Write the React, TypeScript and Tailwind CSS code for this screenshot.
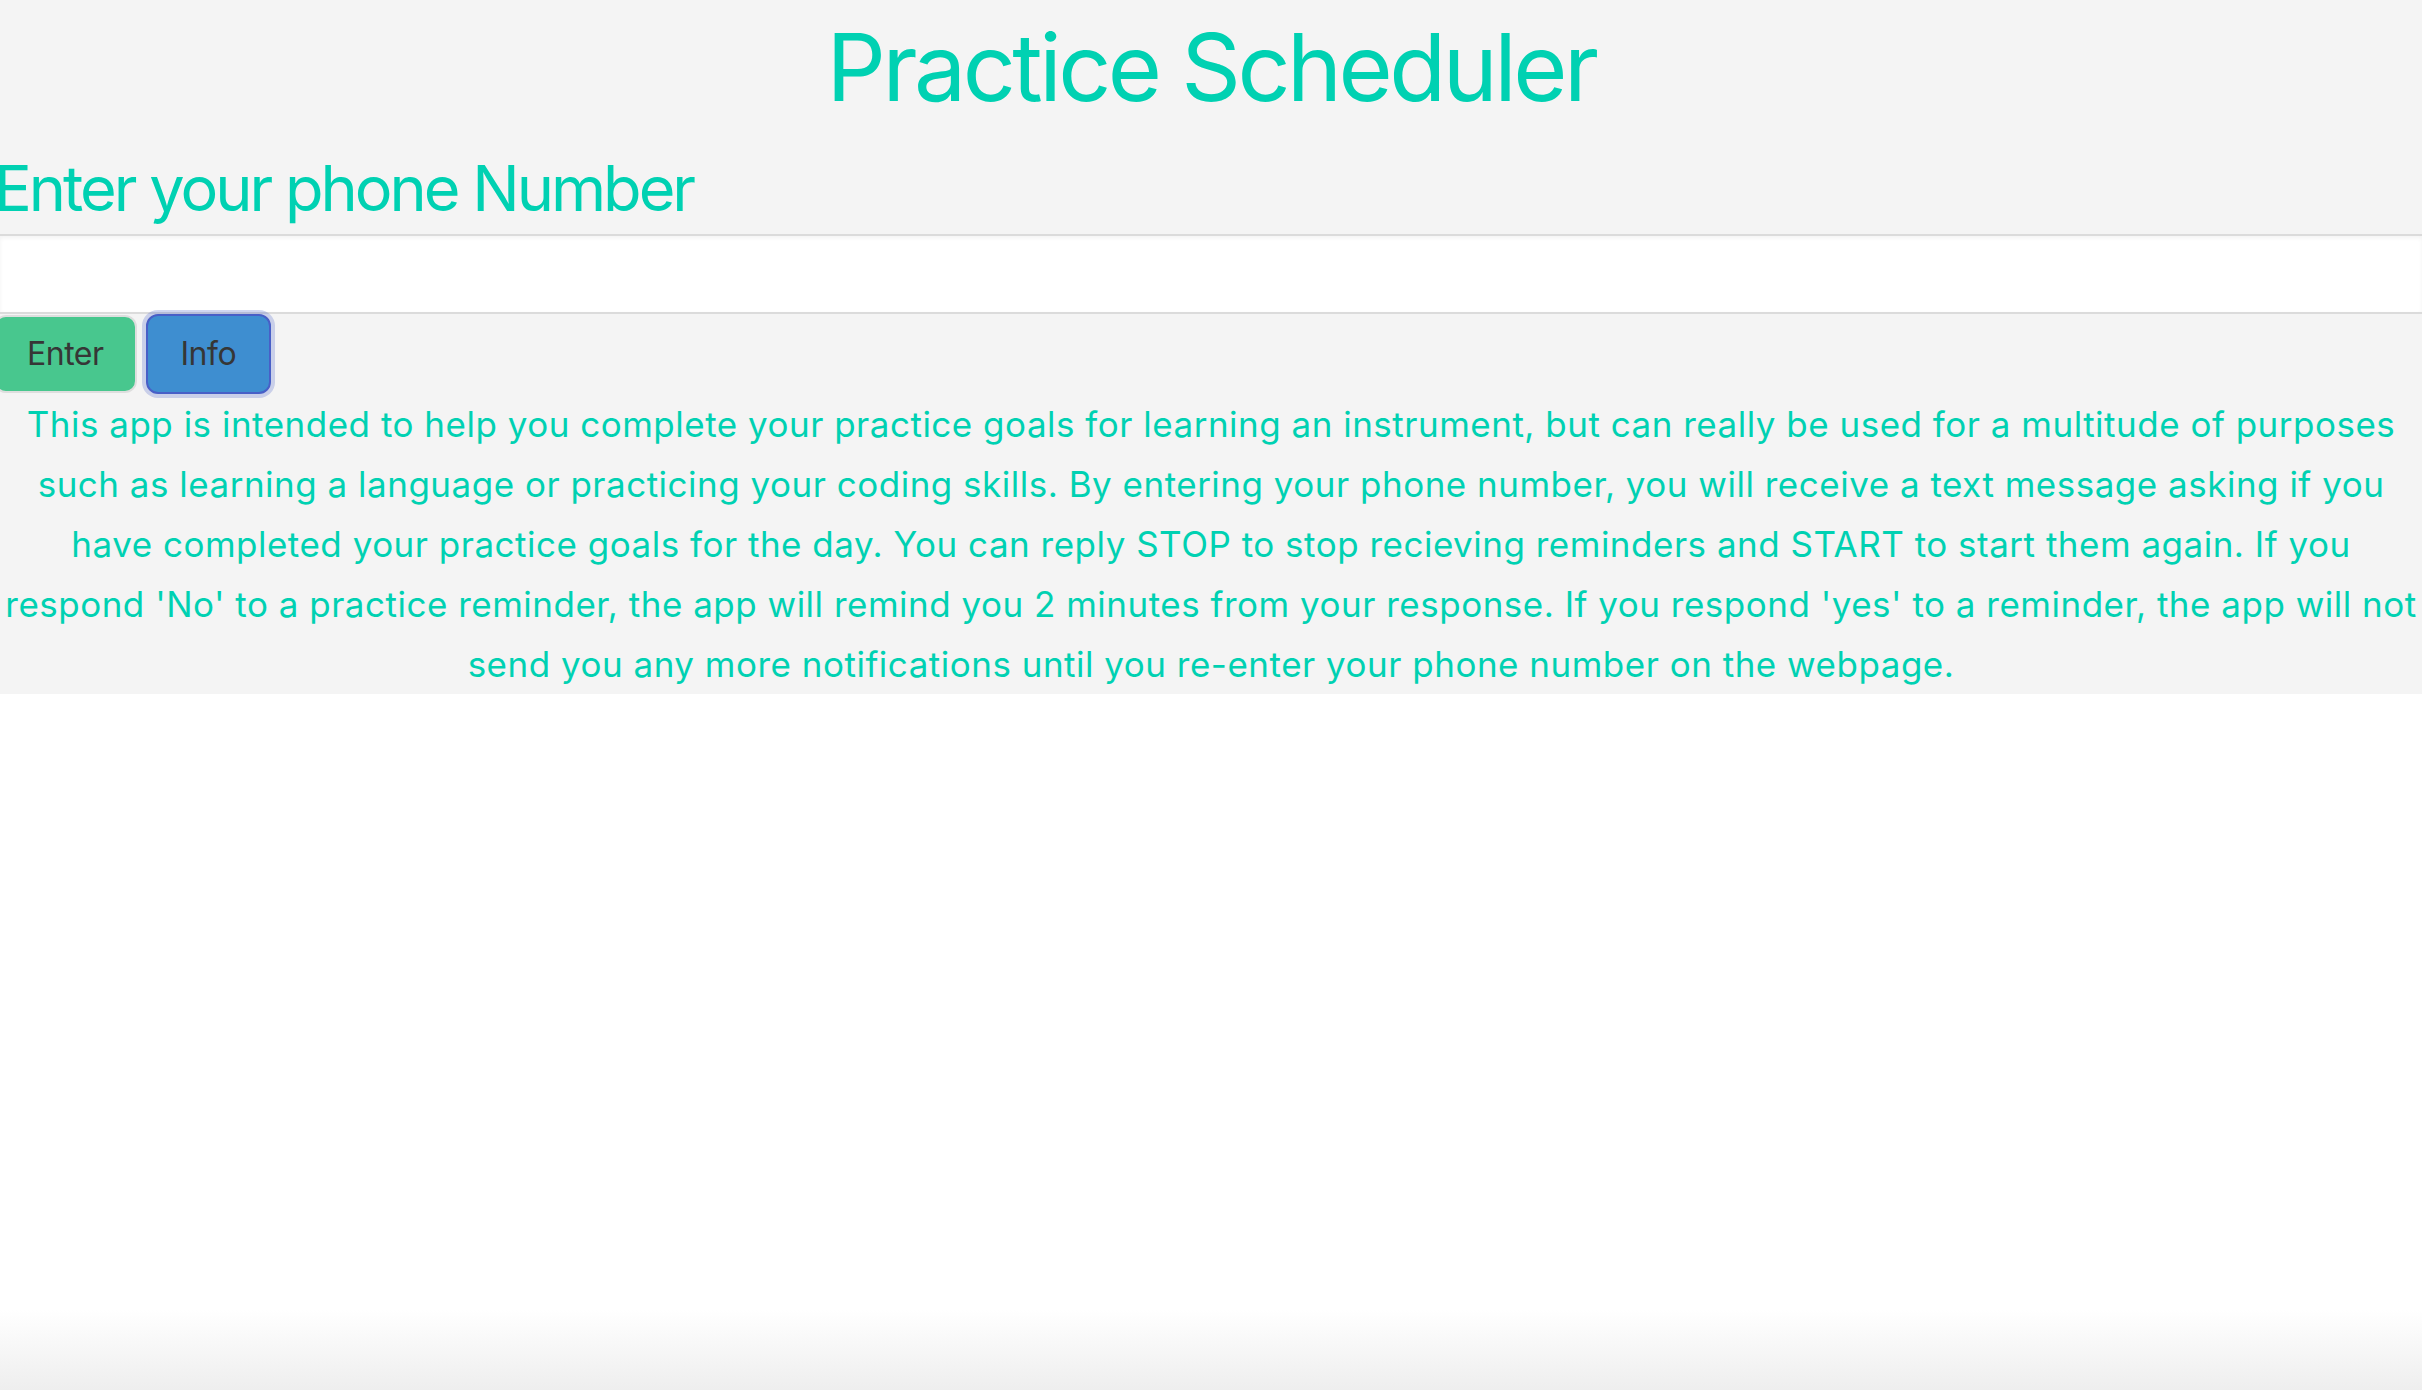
import React, { useState } from 'react';

export default function App() {
  const [phone, setPhone] = useState('');
  const [showInfo, setShowInfo] = useState(true);

  return (
    <div className="min-h-[1390px] flex flex-col bg-white font-['Inter','Liberation_Sans',sans-serif] text-[#00d1b2] overflow-hidden">
      {/* Main panel */}
      <div className="bg-[#f4f4f4]">
        <h1 className="pt-[14px] text-center text-[93px] leading-[106px] tracking-[-3.5px] font-normal">
          Practice Scheduler
        </h1>
        <h2 className="mt-[28px] -ml-[6px] text-[63px] leading-[80px] tracking-[-3px] font-normal">
          Enter your phone Number
        </h2>

        <input
          type="tel"
          value={phone}
          onChange={(e) => setPhone(e.target.value)}
          className="mt-[6px] block w-full h-[80px] bg-white border-y-2 border-[#dbdbdb] shadow-[inset_0_2px_4px_rgba(10,10,10,0.05)] px-6 text-[32px] text-[#363636] outline-none"
        />

        <div className="flex items-start gap-[9px] -ml-[6px]">
          <button className="mt-px h-[78px] px-[31px] bg-[#48c78e] border-2 border-[#dedede] rounded-[12px] text-[32px] text-[#363636] leading-none tracking-[-0.5px]">
            Enter
          </button>
          <button
            onClick={() => setShowInfo(!showInfo)}
            className="h-[80px] px-[33px] bg-[#3e8ed0] border-2 border-[#485fc7] rounded-[12px] shadow-[0_0_0_4px_rgba(72,95,199,0.25)] text-[32px] text-[#363636] leading-none tracking-[-0.5px]"
          >
            Info
          </button>
        </div>

        {showInfo && (
          <p className="text-center text-[35px] leading-[60px] tracking-[0.5px] whitespace-nowrap">
            This app is intended to help you complete your practice goals for learning an instrument, but can really be used for a multitude of purposes
            <br />
            such as learning a language or practicing your coding skills. By entering your phone number, you will receive a text message asking if you
            <br />
            have completed your practice goals for the day. You can reply STOP to stop recieving reminders and START to start them again. If you
            <br />
            respond 'No' to a practice reminder, the app will remind you 2 minutes from your response. If you respond 'yes' to a reminder, the app will not
            <br />
            send you any more notifications until you re-enter your phone number on the webpage.
          </p>
        )}
      </div>

      <div className="flex-1" />
      {/* faint shadow along the bottom edge */}
      <div className="h-[80px] bg-gradient-to-b from-white to-[#eeeeee]" />
    </div>
  );
}
